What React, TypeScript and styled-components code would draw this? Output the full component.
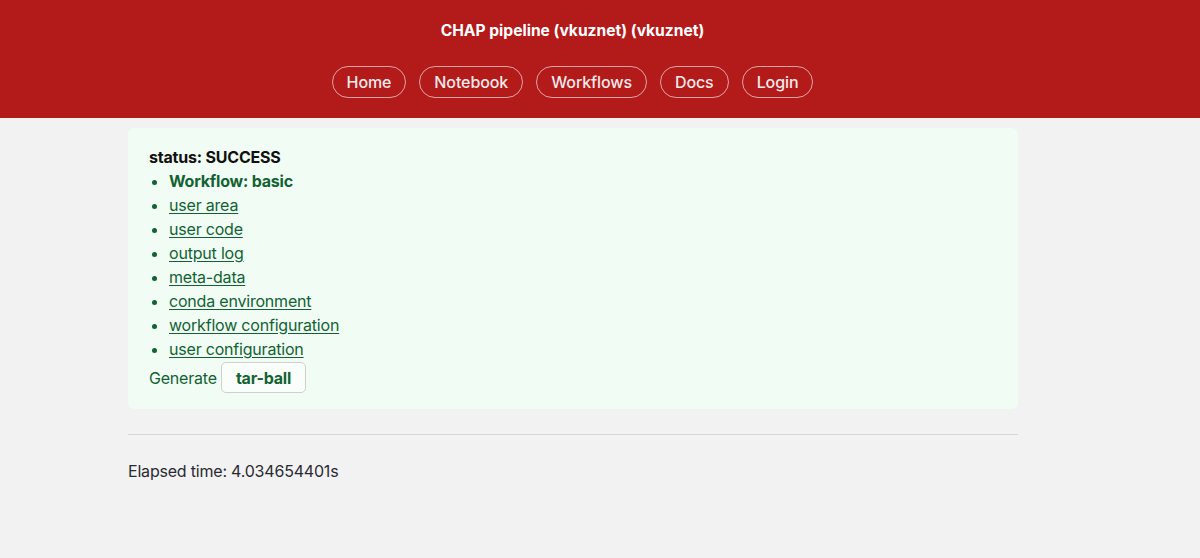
import React from "react";
import styled, { createGlobalStyle } from "styled-components";

const GlobalStyle = createGlobalStyle`
  html, body {
    margin: 0;
    padding: 0;
    background: #f2f2f2;
    font-family: Inter, "Helvetica Neue", Arial, sans-serif;
    font-size: 16px;
    color: #2a2a33;
  }
`;

const Header = styled.header`
  background: #b31a1a;
  height: 118px;
  box-sizing: border-box;
  padding: 20px 55px 0 0;
  display: flex;
  flex-direction: column;
  align-items: center;
`;

const Title = styled.h1`
  margin: 0;
  font-size: 15.6px;
  line-height: 22px;
  font-weight: 700;
  color: #fff;
`;

const Nav = styled.nav`
  margin-top: 24px;
  display: flex;
  gap: 13px;
`;

const NavButton = styled.a`
  display: flex;
  align-items: center;
  height: 32px;
  box-sizing: border-box;
  padding: 0 14px;
  border: 1px solid rgba(255, 255, 255, 0.6);
  border-radius: 16px;
  color: #f5eaea;
  font-size: 16px;
  font-weight: 500;
  text-decoration: none;
  letter-spacing: -0.1px;
`;

const Main = styled.main`
  width: 890px;
  margin-left: 128px;
  padding-top: 10px;
  letter-spacing: -0.2px;
`;

const Panel = styled.section`
  background: #f1fcf5;
  border-radius: 6px;
  padding: 17px 21px 16px;
`;

const Status = styled.div`
  font-weight: 700;
  color: #111;
  line-height: 24px;
  font-size: 16px;
`;

const List = styled.ul`
  margin: 0;
  padding-left: 20px;
  color: #126232;
`;

const Item = styled.li<{ $bold?: boolean }>`
  line-height: 24px;
  font-weight: ${(p) => (p.$bold ? 700 : 400)};
`;

const Link = styled.a`
  color: #126232;
  text-decoration: underline;
  text-underline-offset: 2px;
`;

const GenerateRow = styled.div`
  display: flex;
  align-items: center;
  gap: 4px;
  color: #126232;
  margin-top: 1px;
`;

const TarButton = styled.button`
  height: 31px;
  padding: 0 14px;
  border: 1px solid #cfcfcf;
  border-radius: 5px;
  background: #f9fefb;
  color: #126232;
  font-family: inherit;
  font-size: 16px;
  font-weight: 700;
  letter-spacing: -0.2px;
`;

const Rule = styled.hr`
  margin: 25px 0 0;
  border: none;
  border-top: 1px solid #d6d6d6;
`;

const Elapsed = styled.p`
  margin: 24px 0 0;
  line-height: 24px;
  color: #2a2a33;
`;

const links = [
  "user area",
  "user code",
  "output log",
  "meta-data",
  "conda environment",
  "workflow configuration",
  "user configuration",
];

export default function App() {
  return (
    <>
      <GlobalStyle />
      <Header>
        <Title>CHAP pipeline (vkuznet) (vkuznet)</Title>
        <Nav>
          {["Home", "Notebook", "Workflows", "Docs", "Login"].map((n) => (
            <NavButton key={n} href="#">
              {n}
            </NavButton>
          ))}
        </Nav>
      </Header>
      <Main>
        <Panel>
          <Status>status: SUCCESS</Status>
          <List>
            <Item $bold>Workflow: basic</Item>
            {links.map((l) => (
              <Item key={l}>
                <Link href="#">{l}</Link>
              </Item>
            ))}
          </List>
          <GenerateRow>
            Generate <TarButton>tar-ball</TarButton>
          </GenerateRow>
        </Panel>
        <Rule />
        <Elapsed>Elapsed time: 4.034654401s</Elapsed>
      </Main>
    </>
  );
}
